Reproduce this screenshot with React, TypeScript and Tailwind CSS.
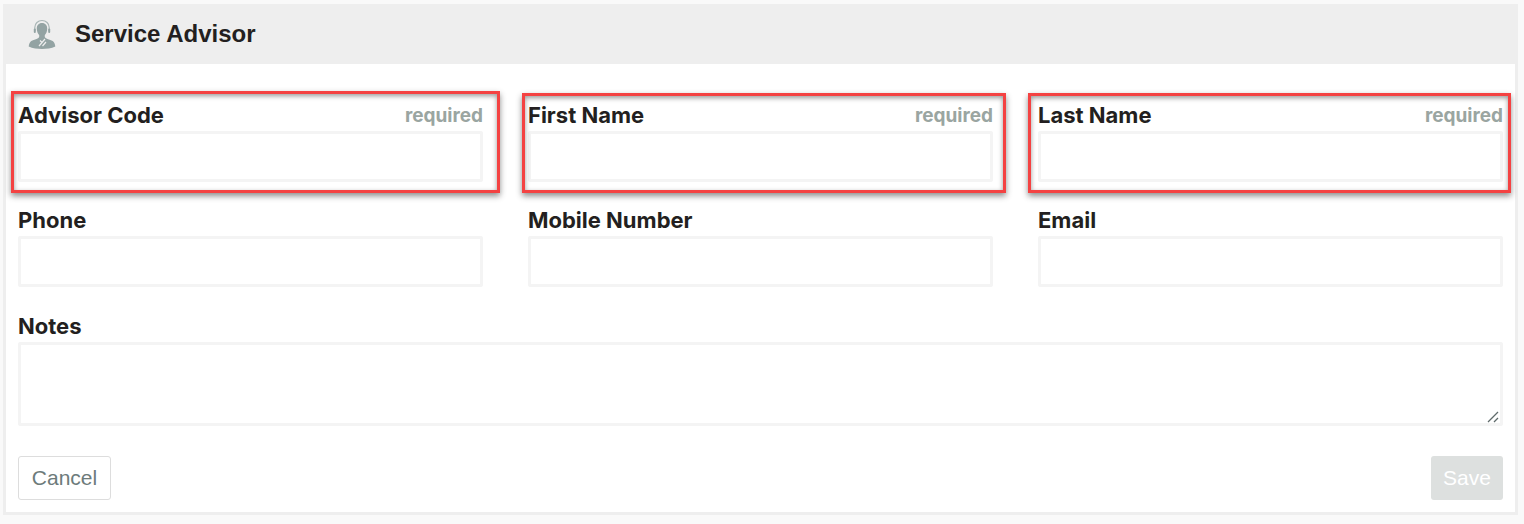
const FONT = "font-['Inter','Liberation_Sans',sans-serif]";

function AdvisorIcon() {
  return (
    <svg width="32" height="32" viewBox="0 0 32 32" className="block">
      {/* head + shoulders */}
      <path d="M16 5c-3.4 0-5.4 2.500-5.200 6 .1 2.400 1 4.700 2.300 6 .3 1 .2 2-.4 2.700-1.600 1.300-5.500 2.200-7.400 3.400-1.600 1-2.300 3-2.600 5.400 3.800 1.800 9 2.500 13.300 2.500s9.500-.7 13.300-2.500c-.3-2.400-1-4.400-2.600-5.400-1.900-1.200-5.800-2.100-7.400-3.400-.6-.7-.7-1.700-.4-2.700 1.300-1.300 2.200-3.600 2.300-6 .2-3.500-1.800-6-5.200-6z" fill="#93a3a3" />
      {/* headset */}
      <path d="M8.800 13V9.500C8.800 5.500 12 2.500 16 2.500s7.200 3 7.200 7V13" fill="none" stroke="#a9b6b6" strokeWidth="1.200" />
      <rect x="7.800" y="10.500" width="2" height="4.500" rx="1" fill="#93a3a3" />
      <rect x="22.200" y="10.500" width="2" height="4.500" rx="1" fill="#93a3a3" />
      {/* collar marks */}
      <path d="M13 28l6-7M16.500 28l3.500-4M14 22.500l2 2" stroke="#eeeeee" strokeWidth="1.200" fill="none" />
    </svg>
  );
}

function RedBox({ className }: { className: string }) {
  return <div className={`pointer-events-none absolute border-[3px] border-[#f44242] shadow-[0_3px_6px_rgba(0,0,0,0.45),inset_0_2px_5px_rgba(0,0,0,0.4)] ${className}`} />;
}

function Field({ label, required, box }: { label: string; required?: boolean; box?: string }) {
  return (
    <div className="relative flex flex-col">
      <div className="flex h-[27px] items-start justify-between">
        <label className="text-[22px] font-bold leading-[23px] text-[#231f20]">{label}</label>
        {required && <span className="text-[19px] font-bold leading-[23px] text-[#9aa5a1]">required</span>}
      </div>
      <input className="h-[51px] w-full rounded-[2px] border-[3px] border-[#f4f4f4] bg-white outline-none" />
      {box && <RedBox className={box} />}
    </div>
  );
}

export default function App() {
  return (
    <div className={`h-[524px] w-[1524px] overflow-hidden bg-[#f9f9f9] pl-[3px] pt-[4px] ${FONT}`}>
      <div className="h-[511px] w-[1515px] border-[3px] border-t-0 border-[#eeeeee] bg-white">
        <div className="flex h-[60px] items-center bg-[#eeeeee] pl-[20px]">
          <AdvisorIcon />
          <h1 className="ml-[17px] font-['Liberation_Sans',sans-serif] text-[24px] font-bold text-[#231f20]">Service Advisor</h1>
        </div>
        <div className="px-[12px] pt-[40px]">
          <div className="grid grid-cols-3 gap-x-[45px] gap-y-[27px]">
            <Field label="Advisor Code" required box="-left-[7px] -right-[17px] -top-[13px] -bottom-[11px]" />
            <Field label="First Name" required box="-left-[6px] -right-[13px] -top-[11px] -bottom-[11px]" />
            <Field label="Last Name" required box="-left-[10px] -right-[8px] -top-[11px] -bottom-[11px]" />
            <Field label="Phone" />
            <Field label="Mobile Number" />
            <Field label="Email" />
          </div>
          <div className="mt-[28px]">
            <label className="block h-[27px] text-[22px] font-bold leading-[23px] text-[#231f20]">Notes</label>
            <div className="relative">
              <textarea className="block h-[84px] w-full resize-none rounded-[2px] border-[3px] border-[#f4f4f4] bg-white outline-none" />
              <svg width="12" height="12" viewBox="0 0 12 12" className="absolute bottom-[3px] right-[4px]">
                <path d="M1 11L11 1M7 11l4-4" stroke="#5f6b6b" strokeWidth="1.300" fill="none" />
              </svg>
            </div>
          </div>
          <div className="mt-[30px] flex items-center justify-between font-['Liberation_Sans',sans-serif]">
            <button className="h-[44px] w-[93px] rounded-[3px] border border-[#dddddd] bg-white text-[21px] text-[#6d7b7b]">Cancel</button>
            <button className="h-[44px] w-[72px] rounded-[3px] bg-[#dde0df] text-[21px] text-white">Save</button>
          </div>
        </div>
      </div>
    </div>
  );
}
